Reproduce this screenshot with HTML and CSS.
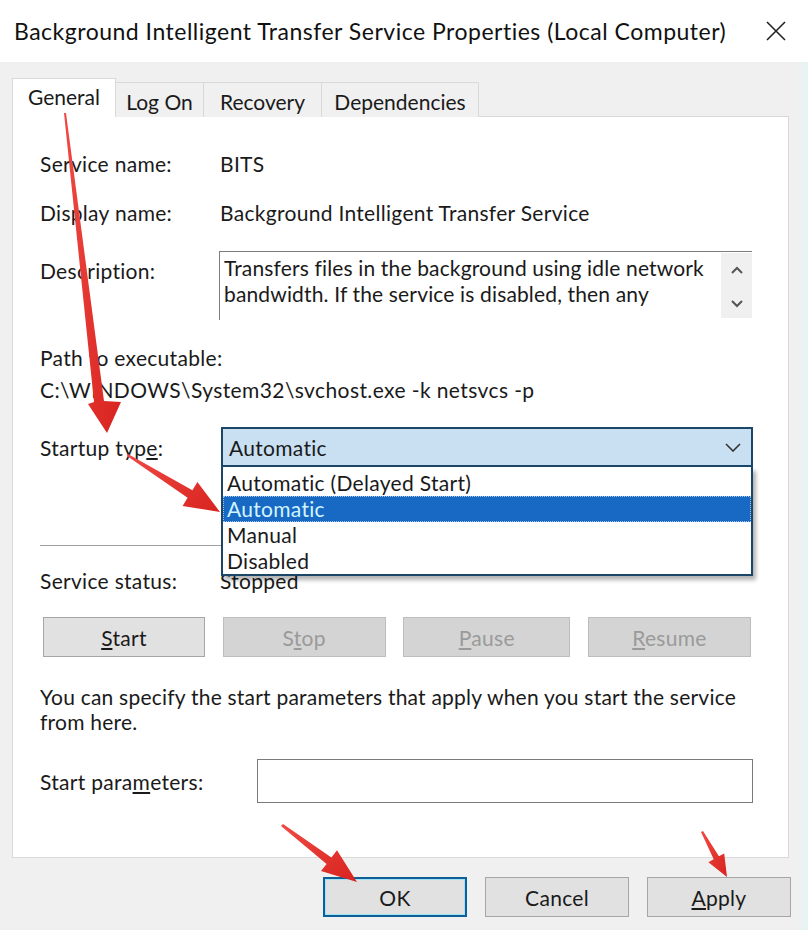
FILE: index.html
```html
<!DOCTYPE html>
<html>
<head>
<meta charset="utf-8">
<link rel="stylesheet" href="styles.css">
</head>
<body>
<div class="titlebar">
  <span class="title">Background Intelligent Transfer Service Properties (Local Computer)</span>
  <svg class="close" viewBox="0 0 20 20"><path d="M1 1 L19 19 M19 1 L1 19"/></svg>
</div>
<div class="main">
  <div class="tabs">
    <div class="tab active t-general">General</div>
    <div class="tab t-logon">Log On</div>
    <div class="tab t-recovery">Recovery</div>
    <div class="tab t-dep">Dependencies</div>
  </div>
  <div class="panel">
    <div class="row r-name"><span class="label">Service name:</span><span class="value">BITS</span></div>
    <div class="row r-display"><span class="label">Display name:</span><span class="value">Background Intelligent Transfer Service</span></div>
    <div class="row r-desc">
      <span class="label">Description:</span>
      <div class="descbox">
        <div class="desctext">Transfers files in the background using idle network bandwidth. If the service is disabled, then any</div>
        <div class="scroll">
          <svg class="sarrow" viewBox="0 0 12 8"><path d="M1 7 L6 2 L11 7"/></svg>
          <svg class="sarrow" viewBox="0 0 12 8"><path d="M1 1 L6 6 L11 1"/></svg>
        </div>
      </div>
    </div>
    <div class="path-label">Path to executable:</div>
    <div class="path">C:\WINDOWS\System32\svchost.exe -k netsvcs -p</div>
    <div class="row r-startup">
      <span class="label">Startup typ<u>e</u>:</span>
      <div class="combo-wrap">
        <div class="combo"><span>Automatic</span><svg class="chev" viewBox="0 0 16 9"><path d="M1 1 L8 8 L15 1"/></svg></div>
        <ul class="dropdown">
          <li>Automatic (Delayed Start)</li>
          <li class="sel">Automatic</li>
          <li>Manual</li>
          <li>Disabled</li>
        </ul>
      </div>
    </div>
    <div class="sep"></div>
    <div class="row r-status"><span class="label">Service status:</span><span class="value">Stopped</span></div>
    <div class="btnrow">
      <div class="btn b-start"><span><u>S</u>tart</span></div>
      <div class="btn disabled b-stop"><span>S<u>t</u>op</span></div>
      <div class="btn disabled b-pause"><span><u>P</u>ause</span></div>
      <div class="btn disabled b-resume"><span><u>R</u>esume</span></div>
    </div>
    <p class="info">You can specify the start parameters that apply when you start the service<br>from here.</p>
    <div class="row r-params"><span class="label">Start para<u>m</u>eters:</span><div class="input"></div></div>
  </div>
  <div class="footer">
    <div class="btn fbtn ok">OK</div>
    <div class="btn fbtn">Cancel</div>
    <div class="btn fbtn"><span><u>A</u>pply</span></div>
  </div>
</div>
<div class="edge"></div>
<svg class="annot" viewBox="0 0 808 930">
  <defs>
    <linearGradient id="rg" x1="0" y1="0" x2="1" y2="1">
      <stop offset="0" stop-color="#f04a44"/>
      <stop offset="1" stop-color="#d8231f"/>
    </linearGradient>
  </defs>
  <polygon points="64,113 66,113 104,401 121,402 107,433 88,404 94,402" />
  <polygon points="128,454 192.4,490.2 197.4,482.1 220,512 182.6,505.9 187.6,497.8 127,456" />
  <polygon points="283,824 331.4,857.5 337,850.3 357,882 321,871 326.6,863.9 281,826" />
  <polygon points="703,831 718.9,856.3 724.2,853.4 727,877 708.4,862.2 713.7,859.3 701,832" />
</svg>
</body>
</html>
```
FILE: styles.css
```css
* { box-sizing: border-box; }
html, body { margin: 0; padding: 0; }
body {
  width: 808px;
  height: 930px;
  overflow: hidden;
  background: #f0f0f0;
  font-family: Lato, "Liberation Sans", sans-serif;
  font-size: 21px;
  letter-spacing: 0.3px;
  color: #1a1a1a;
  position: relative;
}
.titlebar {
  height: 62px;
  background: #fff;
  display: flex;
  align-items: center;
  justify-content: space-between;
  padding: 0 22px 0 14px;
}
.title { font-size: 23px; letter-spacing: 0.5px; color: #111; }
.close { width: 20px; height: 20px; stroke: #222; stroke-width: 1.6; fill: none; }

.main { padding: 16px 17px 0 12px; }

.tabs {
  display: flex;
  align-items: flex-end;
  height: 39px;
  position: relative;
  z-index: 2;
  letter-spacing: 0;
}
.tab {
  height: 35px;
  border: 1px solid #d9d9d9;
  border-bottom: none;
  background: #f0f0f0;
  display: flex;
  align-items: center;
  justify-content: center;
  padding-top: 2px;
  margin-left: -1px;
}
.tab.active {
  height: 39px;
  background: #fff;
  margin-left: 0;
  padding-top: 0;
  padding-bottom: 4px;
}
.t-general { width: 104px; }
.t-logon { width: 89px; }
.t-recovery { width: 119px; }
.t-dep { width: 158px; }

.panel {
  width: 777px;
  height: 742px;
  margin-top: -1px;
  background: #fff;
  border: 1px solid #d9d9d9;
  padding: 0 35px 0 27px;
  position: relative;
}
.row { display: flex; align-items: center; height: 30px; }
.label { width: 180px; flex: none; }
.r-name { margin-top: 31px; }
.r-display { margin-top: 19px; }
.r-desc { margin-top: 24px; height: 69px; align-items: flex-start; }
.r-desc .label { padding-top: 7px; width: 179px; }
.descbox {
  width: 533px;
  height: 69px;
  border-top: 1px solid #7d7d7d;
  border-left: 1px solid #7d7d7d;
  display: flex;
  padding: 1px 0 0 4px;
}
.desctext { flex: 1; line-height: 26px; padding-top: 2px; padding-right: 8px; letter-spacing: 0.15px; }
.scroll {
  width: 31px;
  height: 65px;
  background: #f0f0f0;
  display: flex;
  flex-direction: column;
  align-items: center;
  justify-content: space-between;
  padding: 13px 0 10px;
}
.sarrow { width: 12px; height: 8px; stroke: #555; stroke-width: 2; fill: none; }

.path-label { margin-top: 22px; line-height: 32px; }
.path { line-height: 32px; letter-spacing: 0.4px; }

.r-startup { margin-top: 21px; height: 40px; position: relative; z-index: 3; }
.r-startup .label { width: 181px; }
.combo-wrap { position: relative; width: 532px; height: 40px; }
.combo {
  height: 40px;
  background: #c9e0f2;
  border: 2px solid #1b4668;
  display: flex;
  align-items: center;
  justify-content: space-between;
  padding: 0 10px 0 6px;
}
.chev { width: 16px; height: 9px; stroke: #333; stroke-width: 1.6; fill: none; }
.dropdown {
  position: absolute;
  left: 0;
  top: 40px;
  width: 532px;
  height: 109px;
  margin: 0;
  padding: 3px 0 0;
  list-style: none;
  background: #fff;
  border: 2px solid #1b4668;
  border-top: none;
  box-shadow: 3px 4px 4px rgba(0, 0, 0, 0.3);
}
.dropdown li { height: 26px; line-height: 26px; padding-left: 4px; }
.dropdown li.sel {
  background: #1769c4;
  color: #d2f4ff;
  outline: 1px dotted #9ec4ea;
  outline-offset: -1px;
}

.sep { margin-top: 78px; height: 1px; background: #a0a0a0; }
.r-status { margin-top: 19px; }

.btnrow {
  margin-top: 22px;
  height: 40px;
  display: flex;
  justify-content: space-between;
  padding: 0 2px 0 3px;
}
.btn {
  height: 40px;
  background: #e1e1e1;
  border: 1px solid #a6a6a6;
  display: flex;
  align-items: center;
  justify-content: center;
}
.btn.disabled { background: #d4d4d4; border-color: #bdbdbd; color: #9a9a9a; }
.b-start { width: 162px; }
.b-stop { width: 163px; }
.b-pause { width: 167px; }
.b-resume { width: 163px; }

.info { margin: 27px 0 0; line-height: 25px; letter-spacing: 0.22px; }
.r-params { margin-top: 25px; height: 44px; }
.r-params .label { width: 217px; }
.input { width: 496px; height: 44px; border: 1px solid #7a7a7a; background: #fff; }

.footer {
  display: flex;
  justify-content: flex-end;
  gap: 18px;
  padding-top: 19px;
}
.fbtn { width: 144px; }
.ok { border: 2px solid #0f5e96; box-shadow: inset 0 0 0 1px #9fe3f7; }

.edge {
  position: absolute;
  right: 0;
  top: 62px;
  width: 12px;
  height: 868px;
  background: linear-gradient(to right, #f0f0f0, #e6f3f5);
}

.annot {
  position: absolute;
  left: 0;
  top: 0;
  width: 808px;
  height: 930px;
  pointer-events: none;
  z-index: 10;
  fill: url(#rg);
}
```
